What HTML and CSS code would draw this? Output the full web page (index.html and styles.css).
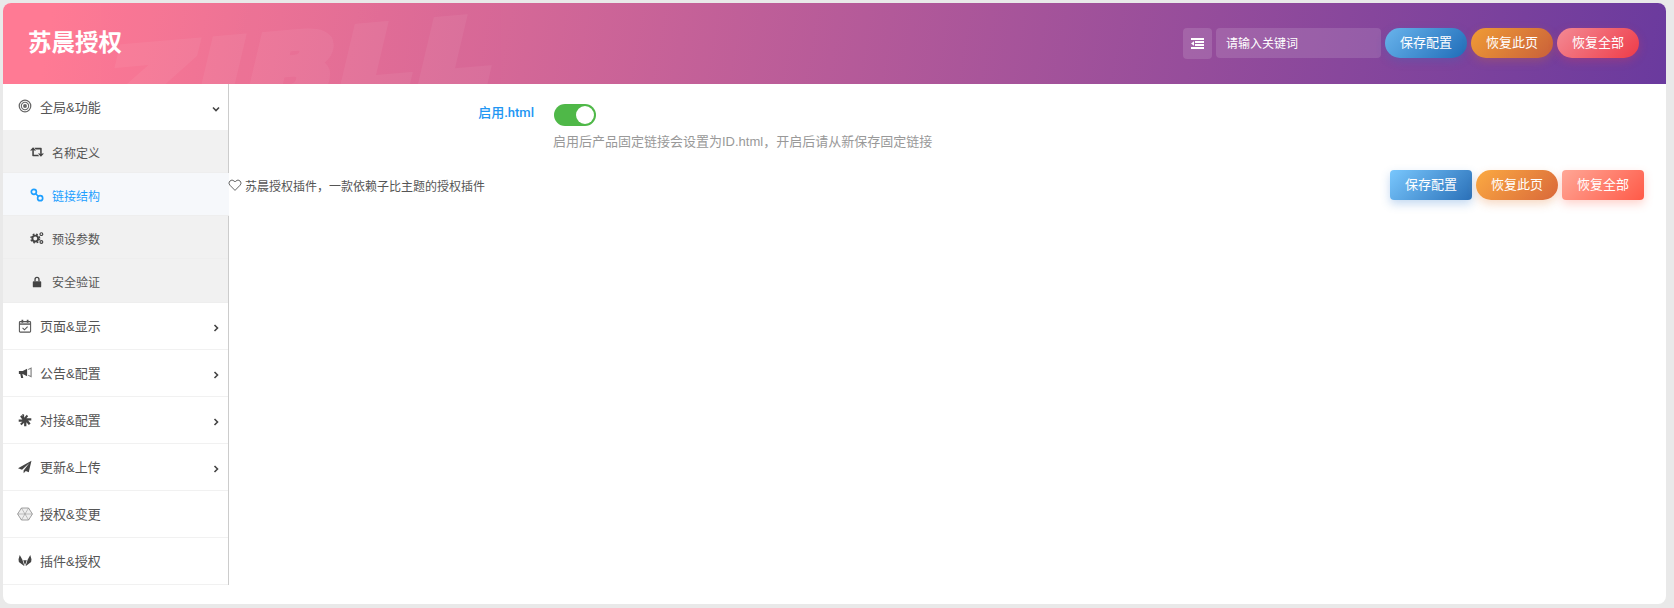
FILE: index.html
```html
<!DOCTYPE html>
<html lang="zh-CN">
<head>
  <meta charset="UTF-8">
  <title>苏晨授权</title>
  <link rel="stylesheet" href="styles.css">
</head>
<body>
  <div class="panel">
    <div class="header">
      <div class="brand">苏晨授权</div>
      <div class="header-tools">
        <div class="menu-btn">
          <svg width="13" height="11" viewBox="0 0 13 11" fill="#fff"><path d="M0 0h13v2H0zM4 3h9v2H4zM4 6h9v2H4zM0 9h13v2H0zM3 3.2v4.6L0 5.5z"/></svg>
        </div>
        <input class="search" type="text" placeholder="请输入关键词">
        <button class="btn btn-blue">保存配置</button>
        <button class="btn btn-orange">恢复此页</button>
        <button class="btn btn-red">恢复全部</button>
      </div>
    </div>

    <div class="body">
      <ul class="nav">
        <li class="nav-item open">
          <svg class="ico" viewBox="0 0 16 16" fill="none" stroke="#666"><circle cx="8" cy="8" r="6.6" stroke-width="1.4"/><circle cx="8" cy="8" r="4.2" stroke-width="1.2"/><circle cx="8" cy="8" r="2.2" fill="#666" stroke="none"/></svg>
          <span>全局&amp;功能</span>
          <svg class="chev" viewBox="0 0 10 10" fill="none" stroke="#444" stroke-width="1.6"><path d="M2 3.5 5 6.5 8 3.5"/></svg>
        </li>
        <li class="sub-item">
          <svg class="ico" viewBox="0 0 16 16" fill="#444"><path d="M2.6 6H4.4V11H9L10.6 12.8H3.4Q2.6 12.8 2.6 12zM5 3.2H12.6Q13.4 3.2 13.4 4V10H11.6V5H6.6z"/><path d="M0 6.4 3.5 2.6 7 6.4zM9 9.6H16L12.5 13.4z"/></svg>
          <span>名称定义</span>
        </li>
        <li class="sub-item active">
          <svg class="ico" viewBox="0 0 16 16" fill="none" stroke="#1e9fff" stroke-width="1.9"><circle cx="4.4" cy="4.4" r="2.9"/><circle cx="11.6" cy="11.6" r="2.9"/><path d="M6.6 6.6 9.4 9.4"/></svg>
          <span>链接结构</span>
        </li>
        <li class="sub-item">
          <svg class="ico" viewBox="0 0 16 16" fill="none" stroke="#444"><circle cx="6" cy="8.6" r="3.3" stroke-width="2.2"/><circle cx="6" cy="8.6" r="5" stroke-width="1.6" stroke-dasharray="2 2"/><circle cx="13" cy="3.6" r="1.6" stroke-width="1.3"/><circle cx="13" cy="12.6" r="1.6" stroke-width="1.3"/></svg>
          <span>预设参数</span>
        </li>
        <li class="sub-item sub-last">
          <svg class="ico" viewBox="0 0 16 16" fill="#444"><path d="M5 7V5a3 3 0 0 1 6 0v2h-1.5V5a1.5 1.5 0 0 0-3 0v2z"/><rect x="3.2" y="7" width="9.6" height="7" rx="1"/></svg>
          <span>安全验证</span>
        </li>
        <li class="nav-item">
          <svg class="ico" viewBox="0 0 16 16" fill="none" stroke="#555" stroke-width="1.2"><rect x="1.6" y="3" width="12.8" height="12" rx="1"/><path d="M1.6 5.8h12.8" stroke-width="1.6"/><path d="M5 .8v3.4M11 .8v3.4" stroke-width="2"/><path d="M5.2 10.2 7.4 12.4 11 8.6"/></svg>
          <span>页面&amp;显示</span>
          <svg class="chev" viewBox="0 0 10 10" fill="none" stroke="#444" stroke-width="1.6"><path d="M3.5 2 6.5 5 3.5 8"/></svg>
        </li>
        <li class="nav-item">
          <svg class="ico" viewBox="0 0 16 16" fill="#444"><path d="M1 5.6h4.4l5-2.6v8.8l-5-2.6H5l1 4.6H3.6L2.6 9.2H1z"/><path d="M11.6 3.4 15.6 1.4v11.8l-4-2v-1.3l2.7 1.2V3.4l-2.7 1.3z" opacity=".7"/></svg>
          <span>公告&amp;配置</span>
          <svg class="chev" viewBox="0 0 10 10" fill="none" stroke="#444" stroke-width="1.6"><path d="M3.5 2 6.5 5 3.5 8"/></svg>
        </li>
        <li class="nav-item">
          <svg class="ico" viewBox="0 0 16 16" fill="#444"><path d="M4.6 1 7 1.6V5.4L10 2l1.6 1.6L9.6 6h5.6v2.6L11.6 8.6 14.4 12l-2 1.6L9.6 10.6v4.4H7V11L4 14 2.4 12.4 5 10H.8V7.4H5L2.4 4 4.6 2.4 6 4.4z"/></svg>
          <span>对接&amp;配置</span>
          <svg class="chev" viewBox="0 0 10 10" fill="none" stroke="#444" stroke-width="1.6"><path d="M3.5 2 6.5 5 3.5 8"/></svg>
        </li>
        <li class="nav-item">
          <svg class="ico" viewBox="0 0 16 16" fill="#444"><path d="M15.4.8 0 9.4l4.6 1.8L13 3.4 6.4 12v3.2l2.5-2.7 3.4 1.4z"/></svg>
          <span>更新&amp;上传</span>
          <svg class="chev" viewBox="0 0 10 10" fill="none" stroke="#444" stroke-width="1.6"><path d="M3.5 2 6.5 5 3.5 8"/></svg>
        </li>
        <li class="nav-item">
          <svg class="ico ico-lg" viewBox="0 0 16 16" fill="#eee" stroke="#888" stroke-width=".8"><path d="M4.4 2h7.2L15.4 8l-3.8 6H4.4L.6 8z"/><path d="M4.4 2 11.6 14M11.6 2 4.4 14M.6 8h14.8" stroke-width=".5"/></svg>
          <span>授权&amp;变更</span>
        </li>
        <li class="nav-item">
          <svg class="ico" viewBox="0 0 16 16" fill="#444"><path d="M2 1.2 5 6.6 7.4 14 1 9.2.6 6zM14 1.2 11 6.6 8.6 14 15 9.2l.4-3.2z"/><path d="M6 7h4L8 12.8z"/></svg>
          <span>插件&amp;授权</span>
        </li>
      </ul>

      <div class="content">
        <div class="option">
          <div class="option-title">启用.html</div>
          <div class="option-field">
            <div class="switch"><i></i></div>
            <p class="option-desc">启用后产品固定链接会设置为ID.html，开启后请从新保存固定链接</p>
          </div>
        </div>
        <div class="footer">
          <div class="footer-text">
            <svg class="heart" viewBox="0 0 14 14" fill="none" stroke="#666" stroke-width="1"><path d="M7 12.4 1.9 7.2a3 3 0 0 1 0-4.2 3 3 0 0 1 4.2 0l.9.9.9-.9a3 3 0 0 1 4.2 0 3 3 0 0 1 0 4.2z"/></svg>
            <span>苏晨授权插件，一款依赖子比主题的授权插件</span>
          </div>
          <div class="footer-btns">
            <button class="btn btn-square btn-blue2">保存配置</button>
            <button class="btn btn-orange2">恢复此页</button>
            <button class="btn btn-square btn-red2">恢复全部</button>
          </div>
        </div>
      </div>
    </div>
  </div>
</body>
</html>
```

FILE: styles.css
```css
/***----BASIC----***/
* {
  box-sizing: border-box;
}
body {
  margin: 0;
  padding: 3px 8px 4px 3px;
  height: 608px;
  overflow: hidden;
  background: #e9e9e9;
  font-family: "Liberation Sans", "Noto Sans CJK SC", sans-serif;
  color: #555;
}
.panel {
  height: 601px;
  background: #fff;
  border-radius: 8px;
  overflow: hidden;
}

/***----Header----***/
.header {
  position: relative;
  height: 81px;
  padding: 25px 27px 0 25px;
  display: flex;
  justify-content: space-between;
  overflow: hidden;
  background: linear-gradient(100deg, #ff7a94 3%, #6a3a9e 100%);
}
.header::before {
  content: "ZIBLL";
  position: absolute;
  left: 108px;
  top: 37px;
  font-family: "DejaVu Sans", sans-serif;
  font-size: 90px;
  line-height: 1;
  font-weight: 700;
  font-style: italic;
  letter-spacing: 6px;
  color: #fff;
  -webkit-text-stroke: 10px #fff;
  opacity: 0.05;
  transform: rotate(-5deg) skewX(-5deg) scaleX(1.25);
  transform-origin: 0 10px;
}
.brand {
  position: relative;
  padding-top: 2px;
  color: #fff;
  font-size: 23.5px;
  line-height: 26px;
  font-weight: 700;
}
.header-tools {
  position: relative;
  display: flex;
  gap: 4px;
  height: 30px;
}
.menu-btn {
  width: 29px;
  height: 31px;
  display: flex;
  align-items: center;
  justify-content: center;
  border-radius: 4px;
  background: rgba(255, 255, 255, 0.13);
}
.search {
  width: 165px;
  height: 30px;
  padding: 1px 10px 0;
  border: none;
  border-radius: 4px;
  outline: none;
  font-family: inherit;
  font-size: 12px;
  color: #fff;
  background: rgba(255, 255, 255, 0.13);
}
.search::placeholder {
  color: #fff;
  opacity: 1;
}

/***----Buttons----***/
.btn {
  width: 82px;
  height: 30px;
  padding: 0 0 3px;
  border: none;
  border-radius: 15px;
  font-family: inherit;
  font-size: 13px;
  color: #fff;
}
.btn-blue {
  background: linear-gradient(135deg, #69b4ec, #1f6cb8);
  box-shadow: 0 3px 10px rgba(50, 110, 190, 0.3);
}
.btn-orange {
  background: linear-gradient(135deg, #f09c35, #c9603a);
  box-shadow: 0 3px 10px rgba(210, 110, 50, 0.3);
}
.btn-red {
  background: linear-gradient(135deg, #f48a94, #ee3b48);
  box-shadow: 0 3px 10px rgba(230, 60, 80, 0.3);
}
.btn-square {
  border-radius: 4px;
}
.btn-blue2 {
  background: linear-gradient(135deg, #79c7fd, #2a70b8);
  box-shadow: 0 4px 10px rgba(60, 130, 210, 0.3);
}
.btn-orange2 {
  background: linear-gradient(135deg, #fbaa42, #d9683a);
  box-shadow: 0 4px 10px rgba(230, 130, 60, 0.3);
}
.btn-red2 {
  background: linear-gradient(135deg, #ffa796, #ff5a48);
  box-shadow: 0 4px 10px rgba(255, 110, 90, 0.3);
}

/***----Sidebar----***/
.body {
  display: flex;
  align-items: flex-start;
}
.nav {
  width: 226px;
  margin: 0;
  padding: 0;
  list-style: none;
  flex: none;
  border-right: 1px solid #ccc;
}
.nav-item {
  height: 47px;
  padding: 0 0 1px 15px;
  display: flex;
  align-items: center;
  font-size: 13px;
  color: #555;
  border-bottom: 1px solid #f1f1f1;
}
.nav-item.open {
  height: 46px;
  padding-bottom: 2px;
  border-bottom: none;
}
.nav-item span {
  margin-left: 8px;
  flex: 1;
}
.ico {
  width: 14px;
  height: 14px;
  flex: none;
}
.ico-lg {
  width: 16px;
  height: 16px;
  margin-left: -1px;
  margin-right: -1px;
}
.chev {
  width: 10px;
  height: 10px;
  margin: 4px 7px 0 0;
  flex: none;
}
.nav-item.open .chev {
  margin-top: 5px;
}
.sub-item {
  height: 43px;
  padding: 2px 0 0 27px;
  display: flex;
  align-items: center;
  font-size: 12px;
  color: #555;
  background: #f1f1f1;
  border-bottom: 1px solid #eee;
}
.sub-item span {
  margin-left: 8px;
}
.sub-last {
  height: 44px;
}
.sub-item.active {
  margin-right: -1px;
  color: #1e9fff;
  background: #f6f8fb;
}

/***----Content----***/
.content {
  flex: 1;
  min-width: 0;
  margin-left: -1px;
}
.option {
  display: flex;
  padding: 20px 0 0;
  height: 86px;
}
.option-title {
  width: 306px;
  text-align: right;
  font-family: Roboto, "Noto Sans CJK SC", sans-serif;
  font-size: 13px;
  line-height: 18px;
  font-weight: 500;
  color: #2196f3;
}
.option-field {
  margin-left: 20px;
}
.switch {
  position: relative;
  width: 42px;
  height: 22px;
  border-radius: 11px;
  background: #4fb848;
}
.switch i {
  position: absolute;
  right: 2px;
  top: 2px;
  width: 18px;
  height: 18px;
  border-radius: 50%;
  background: #fff;
}
.option-desc {
  margin: 7px 0 0 -1px;
  font-size: 13px;
  line-height: 18px;
  color: #999;
}
.footer {
  padding-right: 22px;
  display: flex;
  justify-content: space-between;
  align-items: center;
}
.footer-text {
  display: flex;
  align-items: center;
  gap: 3px;
  font-size: 12px;
  color: #555;
}
.heart {
  width: 14px;
  height: 14px;
}
.footer-btns {
  display: flex;
  gap: 4px;
}
```
